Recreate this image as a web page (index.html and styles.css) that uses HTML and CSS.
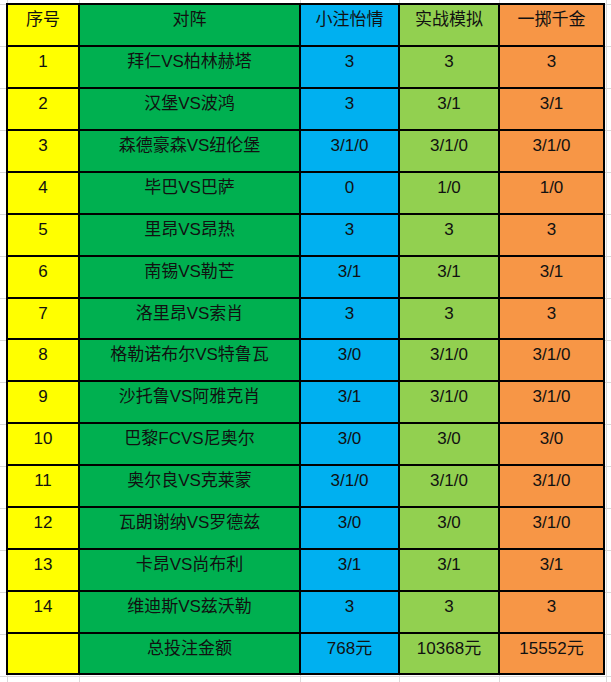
FILE: index.html
```html
<!DOCTYPE html>
<html lang="zh-CN">
<head>
<meta charset="utf-8">
<title>投注表</title>
<link rel="stylesheet" href="styles.css">
</head>
<body>
<div class="sheet">
  <div class="cell c-no">序号</div><div class="cell c-match">对阵</div><div class="cell c-a">小注怡情</div><div class="cell c-b">实战模拟</div><div class="cell c-c">一掷千金</div>
  <div class="cell c-no">1</div><div class="cell c-match">拜仁VS柏林赫塔</div><div class="cell c-a">3</div><div class="cell c-b">3</div><div class="cell c-c">3</div>
  <div class="cell c-no">2</div><div class="cell c-match">汉堡VS波鸿</div><div class="cell c-a">3</div><div class="cell c-b">3/1</div><div class="cell c-c">3/1</div>
  <div class="cell c-no">3</div><div class="cell c-match">森德豪森VS纽伦堡</div><div class="cell c-a">3/1/0</div><div class="cell c-b">3/1/0</div><div class="cell c-c">3/1/0</div>
  <div class="cell c-no">4</div><div class="cell c-match">毕巴VS巴萨</div><div class="cell c-a">0</div><div class="cell c-b">1/0</div><div class="cell c-c">1/0</div>
  <div class="cell c-no">5</div><div class="cell c-match">里昂VS昂热</div><div class="cell c-a">3</div><div class="cell c-b">3</div><div class="cell c-c">3</div>
  <div class="cell c-no">6</div><div class="cell c-match">南锡VS勒芒</div><div class="cell c-a">3/1</div><div class="cell c-b">3/1</div><div class="cell c-c">3/1</div>
  <div class="cell c-no">7</div><div class="cell c-match">洛里昂VS索肖</div><div class="cell c-a">3</div><div class="cell c-b">3</div><div class="cell c-c">3</div>
  <div class="cell c-no">8</div><div class="cell c-match">格勒诺布尔VS特鲁瓦</div><div class="cell c-a">3/0</div><div class="cell c-b">3/1/0</div><div class="cell c-c">3/1/0</div>
  <div class="cell c-no">9</div><div class="cell c-match">沙托鲁VS阿雅克肖</div><div class="cell c-a">3/1</div><div class="cell c-b">3/1/0</div><div class="cell c-c">3/1/0</div>
  <div class="cell c-no">10</div><div class="cell c-match">巴黎FCVS尼奥尔</div><div class="cell c-a">3/0</div><div class="cell c-b">3/0</div><div class="cell c-c">3/0</div>
  <div class="cell c-no">11</div><div class="cell c-match">奥尔良VS克莱蒙</div><div class="cell c-a">3/1/0</div><div class="cell c-b">3/1/0</div><div class="cell c-c">3/1/0</div>
  <div class="cell c-no">12</div><div class="cell c-match">瓦朗谢纳VS罗德兹</div><div class="cell c-a">3/0</div><div class="cell c-b">3/0</div><div class="cell c-c">3/1/0</div>
  <div class="cell c-no">13</div><div class="cell c-match">卡昂VS尚布利</div><div class="cell c-a">3/1</div><div class="cell c-b">3/1</div><div class="cell c-c">3/1</div>
  <div class="cell c-no">14</div><div class="cell c-match">维迪斯VS兹沃勒</div><div class="cell c-a">3</div><div class="cell c-b">3</div><div class="cell c-c">3</div>
  <div class="cell c-no"></div><div class="cell c-match">总投注金额</div><div class="cell c-a">768元</div><div class="cell c-b">10368元</div><div class="cell c-c">15552元</div>
</div>
</body>
</html>
```
FILE: styles.css
```css
html, body {
  margin: 0;
  padding: 0;
}
body {
  width: 611px;
  height: 682px;
  overflow: hidden;
  background-color: #ffffff;
  background-image:
    linear-gradient(#d9d9d9, #d9d9d9),
    linear-gradient(#d9d9d9, #d9d9d9),
    linear-gradient(#d9d9d9, #d9d9d9),
    linear-gradient(#d9d9d9, #d9d9d9),
    linear-gradient(#d9d9d9, #d9d9d9),
    linear-gradient(#d9d9d9, #d9d9d9),
    repeating-linear-gradient(to bottom, #d9d9d9 0 1px, transparent 1px 42px);
  background-size: 1px 100%, 1px 100%, 1px 100%, 1px 100%, 1px 100%, 1px 100%, 100% 100%;
  background-position: 7px 0, 79px 0, 300px 0, 399px 0, 499px 0, 606px 0, 0 4px;
  background-repeat: no-repeat, no-repeat, no-repeat, no-repeat, no-repeat, no-repeat, repeat;
  font-family: "Liberation Sans", "Noto Sans CJK SC", sans-serif;
  font-size: 17px;
  color: #111;
}
.sheet {
  position: relative;
  margin: 3px 0 0 6px;
  width: 599px;
  display: grid;
  grid-template-columns: 70px 219px 97px 98px 103px;
  grid-template-rows: 40px 40px 40px 40px 40px 40px 40px 39px 40px 40px 40px 40px 40px 40px 40px 39px;
  gap: 2px;
  padding: 2px;
  box-sizing: border-box;
  background: #000;
}
.cell {
  display: flex;
  justify-content: center;
  align-items: flex-start;
  padding-top: 4px;
  line-height: 22px;
  white-space: nowrap;
}
.c-no { background: #ffff00; }
.c-match { background: #00b050; }
.c-a { background: #00b0f0; }
.c-b { background: #92d050; }
.c-c { background: #f79646; }
```
